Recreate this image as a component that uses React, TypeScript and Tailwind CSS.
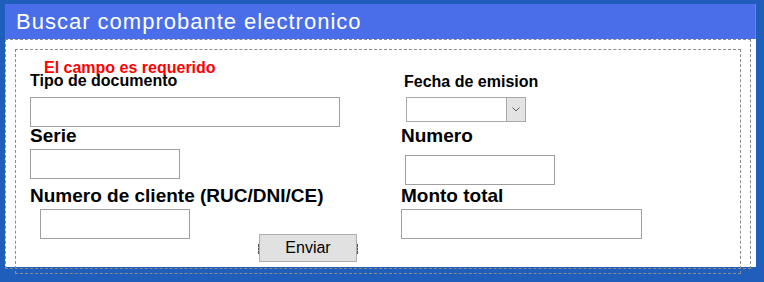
import React from 'react';

const inputCls = 'block h-[30px] border border-[#a0a0a0] bg-white outline-none';
const labelSm = 'text-[16px] font-bold leading-[18px] text-black';
const labelLg = 'text-[19px] font-bold leading-[22px] text-black';

const App: React.FC = () => {
  return (
    <div className="h-[282px] w-[764px] overflow-hidden bg-[#1f5fbb] pl-[5px] pt-[4px] font-['Liberation_Sans',Arial,sans-serif]">
      <div className="w-[751px]">
        <div className="flex h-[35px] items-center border-r border-[#6383f0] bg-[#4a6eea] pl-[11px] text-[22px] tracking-[1px] text-white">
          Buscar comprobante electronico
        </div>

        <div className="h-[228px] bg-white">
          <div className="h-[230px] w-[746px] border border-dashed border-[#8c8c8c] p-[9px]">
            <form className="flex h-[225px] border border-dashed border-[#8c8c8c]" onSubmit={e => e.preventDefault()}>
              {/* columna izquierda */}
              <div className="flex w-[385px] flex-col items-start">
                <div className="ml-[28px] mt-[9px] text-[16px] font-bold leading-[18px] text-[#ff0000]">El campo es requerido</div>
                <label className={`-mt-[5px] ml-[14px] ${labelSm}`}>Tipo de documento</label>
                <input type="text" className={`ml-[14px] mt-[7px] w-[310px] ${inputCls}`} />

                <label className={`-mt-[2px] ml-[14px] ${labelLg}`}>Serie</label>
                <input type="text" className={`ml-[14px] mt-[2px] w-[150px] ${inputCls}`} />

                <label className={`ml-[14px] mt-[6px] ${labelLg}`}>Numero de cliente (RUC/DNI/CE)</label>
                <input type="text" className={`ml-[24px] mt-[2px] w-[150px] ${inputCls}`} />

                <div className="ml-[242px] mt-[5px] h-[10px] w-[100px] border border-dashed border-[#555]">
                  <button
                    type="submit"
                    className="-mt-[11px] block h-[28px] w-[98px] border border-[#adadad] bg-[#e1e1e1] text-[16px] leading-none text-black"
                  >
                    Enviar
                  </button>
                </div>
              </div>

              {/* columna derecha */}
              <div className="flex flex-1 flex-col items-start">
                <label className={`ml-[3px] mt-[23px] ${labelSm}`}>Fecha de emision</label>
                <div className="ml-[5px] mt-[6px] flex h-[25px] w-[120px] border border-[#a9a9a9] bg-white">
                  <div className="flex-1" />
                  <div className="flex w-[19px] items-center justify-center border-l border-[#a9a9a9] bg-[#e3e3e3]">
                    <svg width="8" height="5" viewBox="0 0 8 5" fill="none" stroke="#606060" strokeWidth="1">
                      <path d="M0.5 0.5 4 4 7.5 0.5" />
                    </svg>
                  </div>
                </div>

                <label className={`mt-[3px] ${labelLg}`}>Numero</label>
                <input type="text" className={`ml-[4px] mt-[8px] w-[150px] ${inputCls}`} />

                <label className={labelLg}>Monto total</label>
                <input type="text" className={`mt-[2px] w-[241px] ${inputCls}`} />
              </div>
            </form>
          </div>
        </div>
      </div>
    </div>
  );
};

export default App;
